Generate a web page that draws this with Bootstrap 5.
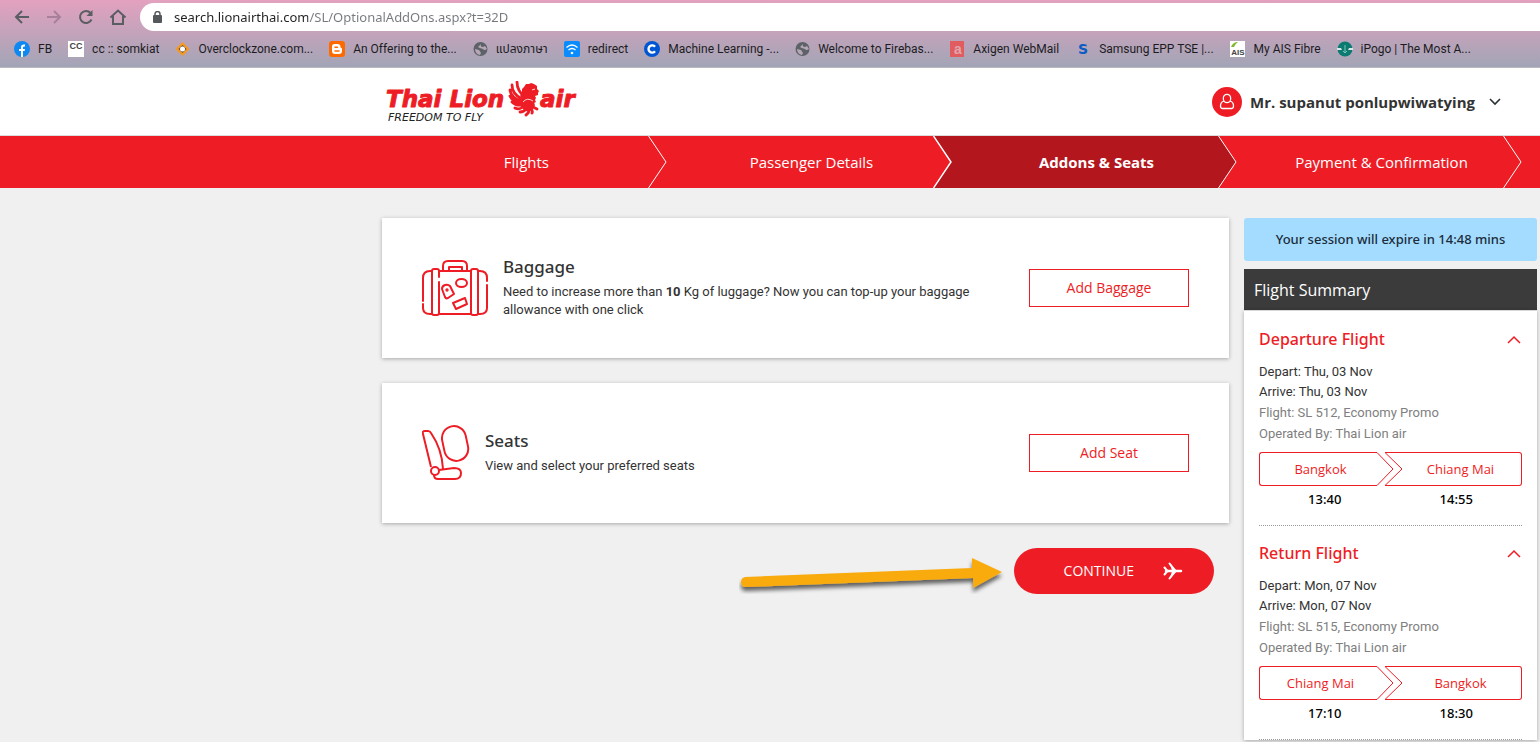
<!DOCTYPE html>
<html lang="en">
<head>
<meta charset="utf-8">
<meta name="viewport" content="width=device-width, initial-scale=1">
<title>Thai Lion Air - Optional Add-ons</title>
<link href="https://cdn.jsdelivr.net/npm/bootstrap@5.3.0/dist/css/bootstrap.min.css" rel="stylesheet">
<style>
  :root { --lion: #ee1d25; --lion-dark: #b3161c; --ink: #333; }
  body { font-family: "Open Sans", sans-serif; background: #f0f0f0; color: var(--ink); }
  svg { display: block; flex: none; }

  /* browser bar */
  .chrome-bar { background: linear-gradient(#e3a1bf, #a2a5b6); border-bottom: 1px solid #b9b9c0; height: 68px; }
  .tool-row { height: 34px; padding: 3px 0 3px 13px; }
  .tool-btn { width: 32px; height: 28px; background: none; border: 0; padding: 0; color: #5a5e63; display: grid; place-items: center; }
  .tool-btn.first { width: 18px; margin-right: 7px; }
  .tool-btn.dim { color: #a8809a; }
  .omni { background: #fff; border-radius: 14px 0 0 14px; height: 28px; padding-left: 13px; margin-left: 6px; }
  .omni input { border: 0; outline: 0; padding: 0; font: 13px/28px "Noto Sans", sans-serif; color: #6b6f74;
    background: linear-gradient(90deg, #202124 138px, #75797e 138px); -webkit-background-clip: text; background-clip: text; -webkit-text-fill-color: transparent; }
  .marks { height: 29px; padding-left: 14px; gap: 16px; font: 12px/16px Roboto, "Noto Sans Thai", sans-serif; }
  .marks a { color: #1c1c1f; text-decoration: none; white-space: nowrap; display: flex; align-items: center; gap: 8px; }

  /* site header */
  .site-head { height: 68px; background: #fff; border-bottom: 1px solid #ddd; padding-left: 25vw; padding-right: 39px; }
  .user-btn { background: none; border: 0; padding: 0; font-size: 15px; line-height: 30px; font-weight: 700; color: var(--ink); gap: 8px; }
  .user-btn .chev { margin-left: 6px; }

  /* progress steps */
  .steps { background: var(--lion); padding: 0 18px 0 24.8vw; margin: 0; list-style: none; height: 52px; }
  .steps li { flex: 1 1 0; position: relative; }
  .steps a { display: block; line-height: 52px; font-size: 15px; text-align: center; color: #fff; text-decoration: none; padding-left: 4px; }
  .steps .now { background: var(--lion-dark); }
  .steps .now a { font-weight: 700; }
  .steps svg { position: absolute; right: 0; top: 0; color: var(--lion); }
  .steps .before-now svg { color: var(--lion-dark); }

  /* page */
  .page { padding: 30px 3px 0 24.8vw; gap: 15px; }
  .addon { background: #fff; height: 140px; padding: 0 40px; box-shadow: 0 1px 4px rgba(0,0,0,.3); gap: 15px; margin-bottom: 25px; }
  .addon h2 { font: 500 17px/22px "Noto Sans", sans-serif; margin: 0 0 4px; padding-bottom: 1px; }
  .addon p { font: 13px/18px Roboto, sans-serif; margin: 0; max-width: 480px; }
  .addon .copy { padding-bottom: 2px; }
  .add-btn { width: 160px; height: 38px; border: 1px solid var(--lion); background: #fff; color: var(--lion); font-size: 14px; border-radius: 0; padding: 0 0 2px; flex: none; }
  .go-btn { width: 200px; height: 46px; border: 0; border-radius: 23px; background: var(--lion); color: #fff; font-size: 14px; line-height: 20px; padding: 0 31px 1px; gap: 29px; }
  .go-row { padding-right: 15px; gap: 9px; }

  /* sidebar */
  .side { width: 293px; flex: none; }
  .session { background: #a3dcff; color: #1c2c3a; border-radius: 3px; font: 500 13px/43px "Noto Sans", sans-serif; text-align: center; margin-bottom: 8px; }
  .side-title { background: #3b3b3b; color: #fff; font-size: 16px; line-height: 39px; margin: 0; padding: 2px 0 0 10px; font-weight: 400; }
  .side-body { background: #fff; border-top: 1px solid #d8d8d8; padding: 1px 15px 0; box-shadow: 0 1px 4px rgba(0,0,0,.3); }
  .leg { padding: 15px 0 16px; border-bottom: 1px dotted #999; }
  .leg-head { background: none; border: 0; padding: 0 1px 0 0; font: 500 16px/24px "Noto Sans", sans-serif; color: var(--lion); margin-bottom: 11px; }
  .leg-info { font: 13px/20px Roboto, sans-serif; margin-bottom: 8px; }
  .leg-info .dim { color: #808080; line-height: 21px; }
  .route { height: 34px; font-size: 13px; line-height: 32px; color: var(--lion); }
  .route .from, .route .to { flex: 1 1 0; border: 1px solid var(--lion); text-align: center; }
  .route .from { border-right: 0; border-radius: 3px 0 0 3px; padding-left: 4px; }
  .route .to { border-left: 0; border-radius: 0 3px 3px 0; padding-right: 4px; }
  .times { margin-top: 3px; font: 500 13px/20px "Noto Sans", sans-serif; color: #000; }
</style>
</head>
<body>
<div class="min-vh-100 d-flex flex-column">

<div class="chrome-bar">
  <div class="tool-row d-flex align-items-center">
    <button class="tool-btn first" aria-label="Back"><svg width="16" height="16" fill="none" stroke="currentColor" stroke-width="2"><path d="M15 8H2M8 2L2 8l6 6"/></svg></button>
    <button class="tool-btn dim" aria-label="Forward"><svg width="16" height="16" fill="none" stroke="currentColor" stroke-width="2"><path d="M1 8h13M8 2l6 6-6 6"/></svg></button>
    <button class="tool-btn" aria-label="Reload"><svg width="16" height="16" fill="none" stroke="currentColor" stroke-width="2"><path d="M13.500 10.500A6 6 0 1 1 12.500 4"/><path d="M14.500 1v6h-6z" fill="currentColor" stroke="none"/></svg></button>
    <button class="tool-btn" aria-label="Home"><svg width="18" height="16" fill="none" stroke="currentColor" stroke-width="2"><path d="M1.500 8.500L9 1.500l7.500 7M4 7v8h10V7"/></svg></button>
    <div class="omni d-flex align-items-center flex-fill">
      <svg width="9" height="13" fill="#54585d"><rect y="4" width="9" height="8" rx="1"/><path d="M2 5V3a2.500 2.500 0 0 1 5 0v2" fill="none" stroke="#54585d" stroke-width="1.500"/></svg>
      <input class="flex-fill ms-2 ps-1" type="text" aria-label="Address" value="search.lionairthai.com/SL/OptionalAddOns.aspx?t=32D">
    </div>
  </div>
  <nav class="marks d-flex align-items-center" aria-label="Bookmarks">
    <a href="#"><svg width="16" height="16"><circle cx="8" cy="8" r="8" fill="#0f88f2"/><path d="M7 16v-6H5V8h2V6q0-3 4-2.500v2q-2-.3-2 1V8h2l-.4 2H9v6z" fill="#fff"/></svg>FB</a>
    <a href="#"><svg width="16" height="16"><path fill="#fff" d="M0 0h16v16H0z"/><text x="8" y="8" font-size="9" font-weight="700" text-anchor="middle" fill="#444" font-family="Liberation Sans, sans-serif">CC</text></svg>cc :: somkiat</a>
    <a href="#"><svg width="15" height="16"><path d="M7.500 1l7 7-7 7-7-7z" fill="#f8981d"/><path d="M7.500 4l4 4-4 4-4-4z" fill="#555"/><circle cx="7.500" cy="8" r="2.500" fill="#fff"/></svg>Overclockzone.com...</a>
    <a href="#"><svg width="16" height="16"><rect width="16" height="16" rx="3" fill="#ff6a00"/><path d="M5.500 3h3q3 0 3 3 0 1 1 1 .5 0 .5 1v2q0 3-3 3H6q-3 0-3-3V5.500Q3 3 5.500 3z" fill="#fff"/><path d="M6 6.200h2.500M6 10h4" stroke="#ff6a00" stroke-width="1.500" stroke-linecap="round"/></svg>An Offering to the...</a>
    <a href="#"><svg width="15" height="16"><circle cx="7.500" cy="8" r="7" fill="#5d6268"/><path d="M8 3q-1 3 2 3l2-1 2 3q-3 2-4 0-4-1-5-2zM2 8l4 1 2 3-1 2q-5-1-5-6z" fill="#b7a6b6"/></svg>แปลงภาษา</a>
    <a href="#"><svg width="16" height="16"><rect width="16" height="16" rx="2" fill="#0a8cff"/><path d="M2.500 6.500q5.500-5 11 0M4.500 9q3.500-3 7 0" fill="none" stroke="#fff" stroke-width="1.300"/><circle cx="8" cy="12" r="1.300" fill="#fff"/></svg>redirect</a>
    <a href="#"><svg width="16" height="16"><circle cx="8" cy="8" r="8" fill="#0056d2"/><path d="M11 5.800A3.600 3.600 0 1 0 11 10.200" fill="none" stroke="#fff" stroke-width="2.400"/></svg>Machine Learning -...</a>
    <a href="#"><svg width="15" height="16"><circle cx="7.500" cy="8" r="7" fill="#5d6268"/><path d="M8 3q-1 3 2 3l2-1 2 3q-3 2-4 0-4-1-5-2zM2 8l4 1 2 3-1 2q-5-1-5-6z" fill="#b7a6b6"/></svg>Welcome to Firebas...</a>
    <a href="#"><svg width="16" height="16"><path fill="#e05c5f" d="M1 0h14v16H1z"/><text x="9" y="13" font-size="14" font-weight="700" text-anchor="middle" fill="#e2a4ae" font-family="Liberation Sans, sans-serif">a</text></svg>Axigen WebMail</a>
    <a href="#"><svg width="16" height="16"><text x="8" y="13" font-size="14" font-weight="700" text-anchor="middle" fill="#0b5bc4" font-family="DejaVu Sans, sans-serif">S</text></svg>Samsung EPP TSE |...</a>
    <a href="#"><svg width="16" height="16"><path fill="#fff" d="M0 0h15v16H0z"/><path d="M1 6q2-5 7-5-3 2-4 5z" fill="#7db928"/><text x="8" y="14" font-size="8" font-weight="700" text-anchor="middle" fill="#444" font-family="Liberation Sans, sans-serif">AIS</text></svg>My AIS Fibre</a>
    <a href="#"><svg width="16" height="16"><circle cx="8" cy="8" r="7.500" fill="#0b7a70"/><path d="M0 7h4l1 2H0zM16 7h-4l-1 2h5z" fill="#d5e6e6"/><path d="M8 4v8M6 10l2 2 2-2" stroke="#7fc4bb" fill="none"/></svg>iPogo | The Most A...</a>
  </nav>
</div>

<header class="site-head d-flex align-items-center justify-content-between">
  <a href="#" aria-label="Thai Lion Air home">
    <svg width="194" height="42" fill="#ee1d25" font-family="DejaVu Sans, sans-serif">
      <g font-size="23" font-weight="700" font-style="italic" stroke="#ee1d25" stroke-linejoin="round">
        <text x="1" y="26">Thai Lion</text>
        <text x="155" y="26">air</text>
      </g>
      <text x="3" y="40" font-size="11" font-style="italic" fill="#222">FREEDOM TO FLY</text>
      <g transform="translate(124 0)">
        <path d="M13 12l0-4 2-2 2-3 3 0 2-1 3 1 3 2 0 3 2 2-1 2 0 2-3 1 1 2-1 2 1 2-2 1 1 3-4-1-5-1-4 1-2-4 2-3-2-2z"/>
        <circle cx="19" cy="24" r="6.500"/>
        <path d="M8 1q0 9 8 15M3 4q0 9 10 14M1 9q1 8 11 11M1 15q3 6 11 7M3 21q4 4 10 3M6 27q4 2 8-1M11 31q4 0 6-3M17 34q3-2 3-5M23 32q1-2-1-4M28 28l-4-2" fill="none" stroke="#ee1d25" stroke-width="2.800" stroke-linecap="round"/>
        <path d="M14 21q4-5 10-1M23 9l3-1" fill="none" stroke="#fff" stroke-width=".8"/>
      </g>
    </svg>
  </a>
  <button class="user-btn d-flex align-items-center">
    <svg width="30" height="30"><circle cx="15" cy="15" r="15" fill="#ee1d25"/><g fill="none" stroke="#fff" stroke-width="1.300"><ellipse cx="15" cy="11.500" rx="3.700" ry="4.200"/><path d="M12 14q-3.500 1-3.500 5 0 2.500 2 2.500h9q2 0 2-2.500 0-4-3.500-5"/></g></svg>
    Mr. supanut ponlupwiwatying
    <svg class="chev" width="12" height="8" fill="none" stroke="#2b3035" stroke-width="1.600"><path d="M1 1l5 5 5-5"/></svg>
  </button>
</header>

<ol class="steps d-flex">
  <li><a href="#">Flights</a><svg width="19" height="52"><path d="M.5 0l17.500 26L.5 52" fill="none" stroke="#fff"/></svg></li>
  <li class="before-now"><a href="#">Passenger Details</a><svg width="19" height="52"><path d="M.5 0H19v52H.5L18 26z" fill="currentColor"/><path d="M.5 0l17.500 26L.5 52" fill="none" stroke="#fff" stroke-width="1.500"/></svg></li>
  <li class="now"><a href="#" aria-current="step">Addons &amp; Seats</a><svg width="19" height="52"><path d="M.5 0H19v52H.5L18 26z" fill="currentColor"/><path d="M.5 0l17.500 26L.5 52" fill="none" stroke="#fff"/></svg></li>
  <li><a href="#">Payment &amp; Confirmation</a><svg width="19" height="52"><path d="M.5 0l17.500 26L.5 52" fill="none" stroke="#fff"/></svg></li>
</ol>

<main class="page d-flex align-items-start flex-fill">
  <div class="flex-fill">
    <section class="addon d-flex align-items-center">
      <svg width="66" height="58" fill="none" stroke="#ee1d25" stroke-width="2" stroke-linecap="round" stroke-linejoin="round">
        <path d="M21 11V7q0-5 5-5h14q5 0 5 5v4M27 11V8h13v3"/>
        <path d="M17 12h32M17 55h32"/>
        <path d="M10 12H8q-7 0-7 7v23M1 45v4q0 6 7 6h2M56 12h2q7 0 7 7v3M65 26v23q0 6-7 6h-2"/>
        <path d="M10 54V12q0-2 2-2h3q2 0 2 2v6M17 23v31q0 2-2 2h-3q-2 0-2-2M49 12q0-2 2-2h3q2 0 2 2v42q0 2-2 2h-3q-2 0-2-2z"/>
        <ellipse cx="39.500" cy="24" rx="5.500" ry="4"/>
        <path d="M20 30q0-3 3-4t5 1l4 8-6 4q-2 1-3-1z"/><circle cx="25" cy="31" r=".7"/>
        <path d="M31 44l12-5 2 6-11 5z"/>
      </svg>
      <div class="copy flex-fill">
        <h2>Baggage</h2>
        <p>Need to increase more than <b>10</b> Kg of luggage? Now you can top-up your baggage allowance with one click</p>
      </div>
      <button class="add-btn">Add Baggage</button>
    </section>

    <section class="addon d-flex align-items-center">
      <svg width="48" height="60" fill="none" stroke="#ee1d25" stroke-width="2" stroke-linejoin="round">
        <path d="M9 44L1 11Q0 8 3 8h3q2 0 3 2 11 16 12 36"/>
        <rect x="21" y="3" width="24" height="35" rx="12" transform="rotate(-12 33 20)"/>
        <circle cx="13" cy="48" r="4"/>
        <path d="M17 47l15-2q7 0 7 5 0 6-6 6H16q-4 0-4-4"/>
      </svg>
      <div class="copy flex-fill">
        <h2>Seats</h2>
        <p>View and select your preferred seats</p>
      </div>
      <button class="add-btn">Add Seat</button>
    </section>

    <div class="go-row d-flex justify-content-end align-items-center">
      <svg width="266" height="46" aria-hidden="true">
        <defs><filter id="soft" x="-5%" y="-30%" width="110%" height="180%"><feDropShadow dx="0" dy="4" stdDeviation="2" flood-opacity=".6"/></filter></defs>
        <path d="M6 29l227-9V10l30 14-29 16V30L7 39q-5 0-5-5 0-4 4-5z" fill="#f9ab0c" filter="url(#soft)"/>
      </svg>
      <button class="go-btn d-flex align-items-center justify-content-end">CONTINUE
        <svg width="20" height="18" fill="none" stroke="#fff" stroke-linecap="round"><path d="M3 9h15" stroke-width="2.500"/><path d="M6.500 1.500L12 9l-5.500 7.500M1.500 5.500L4.500 9l-3 3.500" stroke-width="2"/><path d="M7 1l7 8-7 8 2-8z" fill="#fff" stroke="none"/></svg>
      </button>
    </div>
  </div>

  <aside class="side">
    <div class="session">Your session will expire in 14:48 mins</div>
    <h2 class="side-title">Flight Summary</h2>
    <div class="side-body">
      <section class="leg">
        <button class="leg-head w-100 d-flex justify-content-between align-items-center">Departure Flight
          <svg width="14" height="10" fill="none" stroke="currentColor" stroke-width="1.500"><path d="M1 9l6-6 6 6"/></svg></button>
        <div class="leg-info">
          <div>Depart: Thu, 03 Nov</div><div>Arrive: Thu, 03 Nov</div>
          <div class="dim">Flight: SL 512, Economy Promo</div><div class="dim">Operated By: Thai Lion air</div>
        </div>
        <div class="route d-flex">
          <span class="from">Bangkok</span>
          <svg width="27" height="34" fill="none" stroke="currentColor"><path d="M0 .5l16 16.500L0 33.500M27 .5H8L25 17 8 33.500h19"/></svg>
          <span class="to">Chiang Mai</span>
        </div>
        <div class="times row g-0 text-center"><span class="col-6">13:40</span><span class="col-6">14:55</span></div>
      </section>
      <section class="leg">
        <button class="leg-head w-100 d-flex justify-content-between align-items-center">Return Flight
          <svg width="14" height="10" fill="none" stroke="currentColor" stroke-width="1.500"><path d="M1 9l6-6 6 6"/></svg></button>
        <div class="leg-info">
          <div>Depart: Mon, 07 Nov</div><div>Arrive: Mon, 07 Nov</div>
          <div class="dim">Flight: SL 515, Economy Promo</div><div class="dim">Operated By: Thai Lion air</div>
        </div>
        <div class="route d-flex">
          <span class="from">Chiang Mai</span>
          <svg width="27" height="34" fill="none" stroke="currentColor"><path d="M0 .5l16 16.500L0 33.500M27 .5H8L25 17 8 33.500h19"/></svg>
          <span class="to">Bangkok</span>
        </div>
        <div class="times row g-0 text-center"><span class="col-6">17:10</span><span class="col-6">18:30</span></div>
      </section>
    </div>
  </aside>
</main>
</div>
<script src="https://cdn.jsdelivr.net/npm/bootstrap@5.3.0/dist/js/bootstrap.bundle.min.js"></script>
</body>
</html>
